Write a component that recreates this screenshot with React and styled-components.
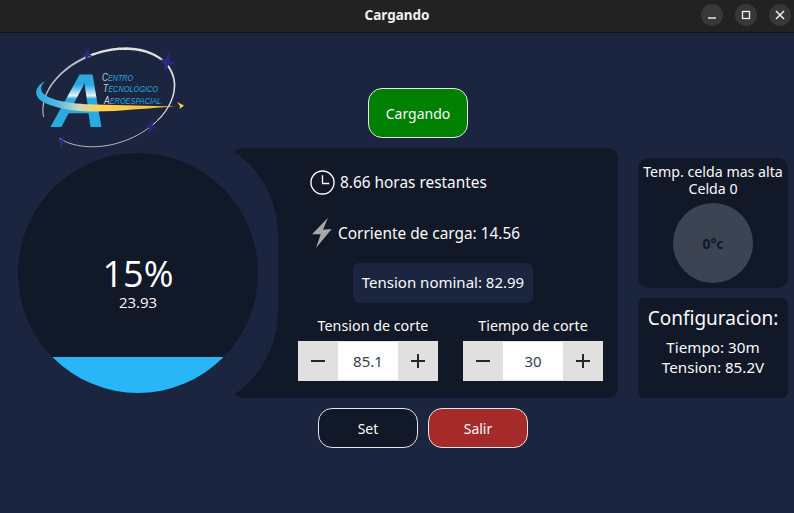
import React from "react";
import styled, { createGlobalStyle } from "styled-components";

const UI = `"Noto Sans", "Open Sans", sans-serif`;
const BG = "#1b2540";
const PANEL = "#111827";

const Global = createGlobalStyle`
  html, body { margin: 0; padding: 0; background: ${BG}; }
  body { width: 794px; height: 513px; overflow: hidden; font-family: ${UI}; color: #f9fafb; }
`;

const Window = styled.div`
  width: 794px;
  height: 513px;
  display: flex;
  flex-direction: column;
  background: ${BG};
`;

const TitleBar = styled.header`
  height: 32px;
  flex: none;
  background: #222222;
  border-bottom: 1px solid #141414;
  display: grid;
  grid-template-columns: 1fr auto 1fr;
  align-items: center;
`;

const Title = styled.h1`
  grid-column: 2;
  margin: -2px 0 0;
  font: 700 13.5px ${UI};
  color: #f0f0f0;
`;

const WindowControls = styled.div`
  grid-column: 3;
  justify-self: end;
  display: flex;
  gap: 12px;
  padding-right: 3px;
  margin-top: -3px;
`;

const WindowControl = styled.div`
  width: 22px;
  height: 22px;
  border-radius: 50%;
  background: #383838;
  display: flex;
  align-items: center;
  justify-content: center;
`;

const Top = styled.div`
  height: 115px;
  flex: none;
  display: flex;
  padding-left: 30px;
`;

const LogoBox = styled.div`
  position: relative;
  z-index: 2;
  width: 160px;
  height: 108px;
  margin-top: 12px;
  margin-right: 178px;
`;

const PillButton = styled.button`
  width: 100px;
  height: ${(p) => p.$h || 40}px;
  box-sizing: border-box;
  border: 1px solid #e5e7eb;
  border-radius: 14px;
  background: ${(p) => p.$bg};
  color: #f9fafb;
  font: 400 14px ${UI};
  padding: 0;
`;

const StatusSlot = styled.div`
  align-self: flex-end;
  margin-bottom: 10px;
`;

const Stage = styled.main`
  height: 250px;
  flex: none;
  display: flex;
  padding-left: 18px;
`;

const Halo = styled.div`
  position: relative;
  z-index: 1;
  flex: none;
  width: 280px;
  height: 280px;
  box-sizing: border-box;
  padding: 20px;
  margin: -15px -45px -15px -20px;
  border-radius: 102px;
  background: ${BG};
`;

const Gauge = styled.div`
  position: relative;
  width: 240px;
  height: 240px;
  border-radius: 50%;
  overflow: hidden;
  background: ${PANEL};
  display: flex;
  flex-direction: column;
  align-items: center;
  justify-content: center;
  padding-top: 22px;
  box-sizing: border-box;
`;

const GaugeFill = styled.div`
  position: absolute;
  left: 0;
  right: 0;
  bottom: 0;
  background: #29b6f6;
`;

const Percent = styled.div`
  font: 400 36px/36px "Open Sans", sans-serif;
  color: #fff;
`;

const Voltage = styled.div`
  font: 400 15px/20px "Open Sans", sans-serif;
  color: #f9fafb;
`;

const Panel = styled.section`
  width: 385px;
  height: 250px;
  flex: none;
  box-sizing: border-box;
  background: ${PANEL};
  border-radius: 10px;
  padding: 0 0 0 65px;
  display: flex;
  flex-direction: column;
`;

const InfoRow = styled.div`
  height: ${(p) => p.$h}px;
  margin-bottom: ${(p) => p.$after || 0}px;
  display: flex;
  align-items: center;
  gap: ${(p) => p.$gap}px;
  padding-left: ${(p) => p.$pad}px;
  font-size: 15.4px;
`;

const Nominal = styled.div`
  width: 180px;
  height: 40px;
  box-sizing: border-box;
  padding-bottom: 2px;
  margin: 0 0 0 55px;
  border-radius: 6px;
  background: ${BG};
  display: flex;
  align-items: center;
  justify-content: center;
  font-size: 15px;
`;

const Cutoffs = styled.div`
  display: flex;
  gap: 25px;
  margin-top: 13px;
`;

const Cutoff = styled.div`
  width: 140px;
  display: flex;
  flex-direction: column;
  align-items: center;
  gap: 5px;
`;

const CutoffLabel = styled.label`
  font-size: 14.3px;
  line-height: 20px;
  white-space: nowrap;
  transform: translateX(${(p) => p.$shift || 0}px);
`;

const Stepper = styled.div`
  display: flex;
  width: 140px;
  height: 40px;
`;

const StepButton = styled.div`
  width: 40px;
  height: 40px;
  background: #e0e0e0;
  display: flex;
  align-items: center;
  justify-content: center;
`;

const StepValue = styled.div`
  width: 60px;
  box-sizing: border-box;
  border-top: 1px solid #e0e0e0;
  border-bottom: 1px solid #e0e0e0;
  background: #fff;
  color: #374151;
  font-size: 15px;
  display: flex;
  align-items: center;
  justify-content: center;
`;

const Side = styled.aside`
  width: 150px;
  margin-left: 20px;
  padding-top: 10px;
  display: flex;
  flex-direction: column;
  gap: 10px;
`;

const TempCard = styled.div`
  height: 130px;
  box-sizing: border-box;
  border-radius: 10px;
  background: ${PANEL};
  display: flex;
  flex-direction: column;
  align-items: center;
  padding-top: 5px;
  text-align: center;
  font-size: 14.2px;
  line-height: 17px;
`;

const TempDial = styled.div`
  width: 80px;
  height: 80px;
  margin-top: 6px;
  border-radius: 50%;
  background: #3c4454;
  color: #111827;
  font-weight: 700;
  font-size: 14px;
  display: flex;
  align-items: center;
  justify-content: center;
`;

const ConfigCard = styled.div`
  height: 100px;
  box-sizing: border-box;
  border-radius: 6px;
  background: ${PANEL};
  padding-top: 7px;
  text-align: center;
  font-size: 15.2px;
  line-height: 20px;
`;

const ConfigTitle = styled.div`
  font-size: 19px;
  line-height: 26px;
  margin-bottom: 6px;
`;

const Actions = styled.div`
  display: flex;
  gap: 10px;
  margin-top: 10px;
  padding-left: 318px;
`;

const Clock = () => (
  <svg width="25" height="25" viewBox="0 0 26 26" fill="none" stroke="#fff" strokeWidth="1.4">
    <circle cx="13" cy="13" r="12" />
    <path d="M13 5.5V14H20" />
  </svg>
);

const Bolt = () => (
  <svg width="20" height="32" viewBox="278 236 60 92">
    <path d="M326 236L278 286L304 286L290 327L337 270L311 272Z" fill="#a8a8a8" />
  </svg>
);

const Minus = () => (
  <svg width="16" height="16" viewBox="0 0 16 16" stroke="#262626" strokeWidth="2">
    <path d="M1 8H15" />
  </svg>
);

const Plus = () => (
  <svg width="16" height="16" viewBox="0 0 16 16" stroke="#262626" strokeWidth="2">
    <path d="M1 8H15M8 1V15" />
  </svg>
);

const Star = ({ x, y, s }) => (
  <path
    transform={`translate(${x} ${y}) scale(${s}) rotate(12)`}
    d="M0 -10L1.8 -2L8 0L1.8 2L0 10L-1.8 2L-8 0L-1.8 -2Z"
    fill="#2c2a80"
  />
);

const ringSegments = () => {
  const out = [];
  const c = Math.cos((20 * Math.PI) / 180);
  const s = Math.sin((20 * Math.PI) / 180);
  const pt = (d) => {
    const a = (d * Math.PI) / 180;
    const lx = 68 * Math.cos(a);
    const ly = 46 * Math.sin(a);
    return [108.7 + lx * c + ly * s, 97.7 - lx * s + ly * c];
  };
  for (let d = -175; d < 185; d += 3) {
    const [x1, y1] = pt(d);
    const [x2, y2] = pt(d + 3.2);
    let w = 0.8;
    if (d < 60) w = 1 + 1.6 * Math.max(0, 1 - Math.abs(d + 60) / 115);
    if (d >= 60 && d < 150) w = 0.9;
    if (d >= 150 && (d - 150) % 9 !== 0) continue;
    const col = d < 60 && d > -100 ? "#e6e6e6" : "#c4c4c4";
    out.push(<line key={d} x1={x1} y1={y1} x2={x2} y2={y2} stroke={col} strokeWidth={w} />);
  }
  return out;
};

const LogoText = styled.text`
  font: italic 400 9.5px "Liberation Sans", sans-serif;
  fill: #2aa9e0;
`;

const LogoInitial = styled.tspan`
  fill: #c9cdd2;
  font-size: 11px;
`;

const LogoLetter = styled.text`
  font: italic 700 76px "Liberation Sans", sans-serif;
`;

const Logo = () => (
  <svg width="160" height="108" viewBox="30 45 160 108" fill="none">
    <defs>
      <linearGradient id="aFill" gradientUnits="userSpaceOnUse" x1="0" y1="73" x2="0" y2="127">
        <stop offset="0" stopColor="#29abe2" />
        <stop offset="0.22" stopColor="#29abe2" />
        <stop offset="0.42" stopColor="#e6f4fb" />
        <stop offset="0.48" stopColor="#29abe2" />
        <stop offset="1" stopColor="#29abe2" />
      </linearGradient>
      <linearGradient id="swoosh" gradientUnits="userSpaceOnUse" x1="36" y1="0" x2="176" y2="0">
        <stop offset="0" stopColor="#29abe2" />
        <stop offset="0.14" stopColor="#4cb8e4" />
        <stop offset="0.3" stopColor="#cfd6b8" />
        <stop offset="0.45" stopColor="#fbd25a" />
        <stop offset="1" stopColor="#fdb913" />
      </linearGradient>
    </defs>
    {ringSegments()}
    <LogoLetter x="52" y="127" fill="url(#aFill)">A</LogoLetter>
    <path
      d="M45 81C33 88 32 99 50 105C70 112 90 112 115 111C140 109 160 107.5 176 106.5C150 105.5 120 105.5 95 104.5C70 104 47 100 42 92C40 88 42 84 45 81Z"
      fill="url(#swoosh)"
    />
    <path d="M177 102L184 105.5L179.5 109L180 106Z" fill="#fdd835" />
    <Star x={87} y={55} s={0.75} />
    <Star x={167} y={62} s={1.15} />
    <Star x={151} y={127} s={0.8} />
    <Star x={62} y={142} s={0.7} />
    <LogoText x="102" y="81" textLength="31" lengthAdjust="spacingAndGlyphs"><LogoInitial>C</LogoInitial>ENTRO</LogoText>
    <LogoText x="103" y="92" textLength="55" lengthAdjust="spacingAndGlyphs"><LogoInitial>T</LogoInitial>ECNOLÓGICO</LogoText>
    <LogoText x="104" y="104" textLength="57" lengthAdjust="spacingAndGlyphs"><LogoInitial>A</LogoInitial>EROESPACIAL</LogoText>
  </svg>
);

const StepperField = ({ label, value, shift }) => (
  <Cutoff>
    <CutoffLabel $shift={shift}>{label}</CutoffLabel>
    <Stepper>
      <StepButton><Minus /></StepButton>
      <StepValue>{value}</StepValue>
      <StepButton><Plus /></StepButton>
    </Stepper>
  </Cutoff>
);

export default function App() {
  const charge = 15;
  return (
    <Window>
      <Global />
      <TitleBar>
        <Title>Cargando</Title>
        <WindowControls>
          <WindowControl>
            <svg width="10" height="10" viewBox="0 0 10 10" stroke="#f2f2f2" strokeWidth="1.4"><path d="M1 8H9" /></svg>
          </WindowControl>
          <WindowControl>
            <svg width="10" height="10" viewBox="0 0 10 10" fill="none" stroke="#f2f2f2" strokeWidth="1.3"><rect x="1.5" y="1.5" width="7" height="7" /></svg>
          </WindowControl>
          <WindowControl>
            <svg width="10" height="10" viewBox="0 0 10 10" stroke="#f2f2f2" strokeWidth="1.5"><path d="M1 1L9 9M9 1L1 9" /></svg>
          </WindowControl>
        </WindowControls>
      </TitleBar>
      <Top>
        <LogoBox><Logo /></LogoBox>
        <StatusSlot><PillButton $bg="#008000" $h={50}>Cargando</PillButton></StatusSlot>
      </Top>
      <Stage>
        <Halo>
          <Gauge>
            <GaugeFill style={{ height: `${charge}%` }} />
            <Percent>{charge}%</Percent>
            <Voltage>23.93</Voltage>
          </Gauge>
        </Halo>
        <Panel>
          <InfoRow $h={68} $gap={5} $pad={12}><Clock />8.66 horas restantes</InfoRow>
          <InfoRow $h={34} $after={13} $gap={6} $pad={14}><Bolt />Corriente de carga: 14.56</InfoRow>
          <Nominal>Tension nominal: 82.99</Nominal>
          <Cutoffs>
            <StepperField label="Tension de corte" value="85.1" shift={5} />
            <StepperField label="Tiempo de corte" value="30" />
          </Cutoffs>
        </Panel>
        <Side>
          <TempCard>
            Temp. celda mas alta<br />Celda 0
            <TempDial>0°c</TempDial>
          </TempCard>
          <ConfigCard>
            <ConfigTitle>Configuracion:</ConfigTitle>
            Tiempo: 30m<br />Tension: 85.2V
          </ConfigCard>
        </Side>
      </Stage>
      <Actions>
        <PillButton $bg={PANEL}>Set</PillButton>
        <PillButton $bg="#a52a2a">Salir</PillButton>
      </Actions>
    </Window>
  );
}
